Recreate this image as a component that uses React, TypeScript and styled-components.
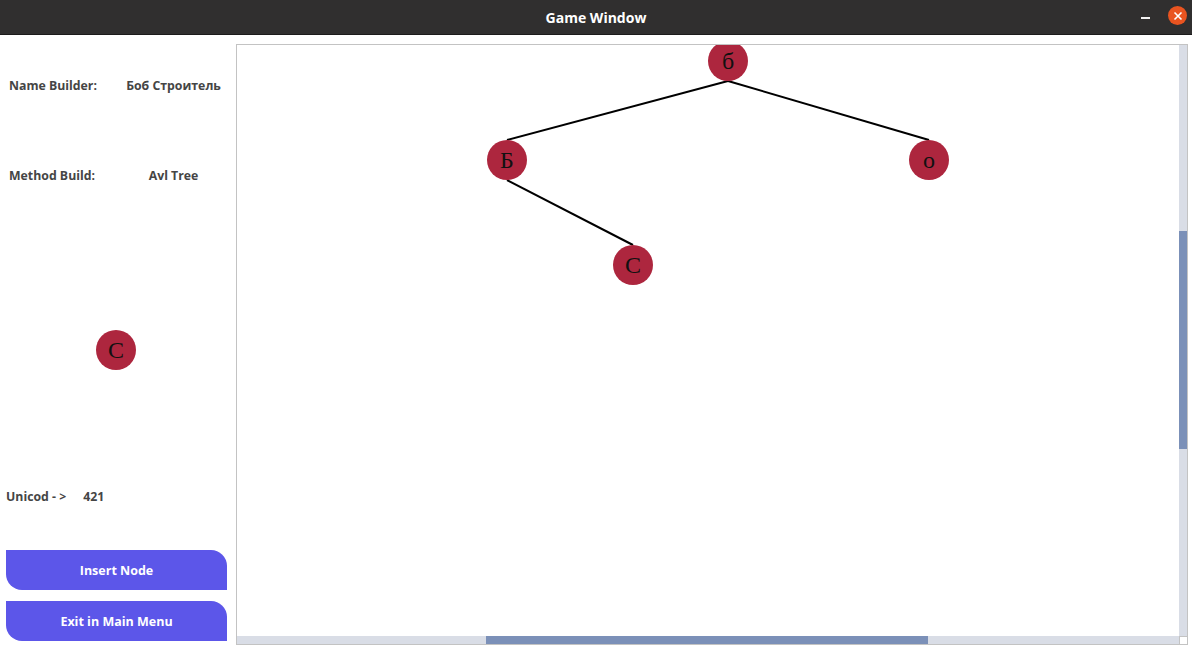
import styled, { createGlobalStyle } from "styled-components";

const GlobalStyle = createGlobalStyle`
  html, body {
    margin: 0;
    padding: 0;
    background: #ffffff;
    overflow: hidden;
  }
  * {
    box-sizing: border-box;
  }
`;

const Window = styled.div`
  width: 1192px;
  height: 658px;
  display: flex;
  flex-direction: column;
  background: #ffffff;
  font-family: "Open Sans", "Noto Sans", sans-serif;
`;

const TitleBar = styled.div`
  height: 35px;
  flex-shrink: 0;
  background: #302f2f;
  border-bottom: 1px solid #1c1b1b;
  display: flex;
  align-items: center;
  justify-content: center;
  position: relative;
  color: #ffffff;
  font-weight: 700;
  font-size: 14px;
`;

const Controls = styled.div`
  position: absolute;
  right: 5px;
  top: 6px;
  display: flex;
  align-items: center;
  gap: 18px;
`;

const MinButton = styled.div`
  width: 9px;
  height: 2px;
  margin-top: 4px;
  background: #f2f2f2;
`;

const CloseButton = styled.div`
  width: 19px;
  height: 19px;
  border-radius: 50%;
  background: #e95420;
  display: flex;
  align-items: center;
  justify-content: center;
`;

const Body = styled.div`
  flex: 1;
  display: flex;
`;

const SidePanel = styled.div`
  width: 236px;
  flex-shrink: 0;
  display: flex;
  flex-direction: column;
  padding-top: 40px;
`;

const InfoRow = styled.div<{ gapTop: number }>`
  display: grid;
  grid-template-columns: 117px 95px;
  align-items: center;
  height: 20px;
  margin-top: ${(p) => p.gapTop}px;
  padding-left: 9px;
  color: #454545;
  font-size: 12.3px;
  font-weight: 700;
  white-space: nowrap;
`;

const Value = styled.span`
  text-align: center;
  display: flex;
  justify-content: center;
`;

const NodeSlot = styled.div`
  margin-top: 145px;
  display: flex;
  justify-content: center;
`;

const Node = styled.div`
  width: 40px;
  height: 40px;
  border-radius: 50%;
  background: #ad263e;
  display: flex;
  align-items: center;
  justify-content: center;
  color: #111111;
  font-family: "Liberation Serif", "Times New Roman", serif;
  font-size: 24px;
  margin-left: -4px;
`;

const UnicodeRow = styled.div`
  margin-top: 116px;
  height: 20px;
  display: flex;
  align-items: center;
  gap: 17px;
  padding-left: 6px;
  color: #454545;
  font-size: 12.3px;
  font-weight: 700;
`;

const Buttons = styled.div`
  margin-top: 44px;
  padding-left: 6px;
  display: flex;
  flex-direction: column;
  gap: 11px;
`;

const ActionButton = styled.button`
  width: 221px;
  height: 40px;
  border: none;
  border-radius: 0 16px 0 16px;
  background: #5c56e9;
  color: #ffffff;
  font-family: "Open Sans", "Noto Sans", sans-serif;
  font-size: 12.5px;
  font-weight: 700;
  cursor: pointer;
`;

const CanvasArea = styled.div`
  flex: 1;
  padding: 9px 4px 13px 0;
  display: flex;
`;

const Canvas = styled.div`
  flex: 1;
  border: 1px solid #c3c3c3;
  display: grid;
  grid-template-columns: 1fr 8px;
  grid-template-rows: 1fr 8px;
  overflow: hidden;
`;

const Drawing = styled.svg`
  display: block;
  width: 100%;
  height: 100%;
  overflow: hidden;
`;

const Track = styled.div`
  background: #d9dde6;
  position: relative;
`;

const Thumb = styled.div`
  position: absolute;
  background: #7b90b8;
`;

const Corner = styled.div`
  background: #ffffff;
  border-left: 1px solid #c3c3c3;
  border-top: 1px solid #c3c3c3;
`;

// tree nodes in canvas coordinates (canvas origin at 237,45)
const nodes = [
  { ch: "б", x: 491, y: 16 },
  { ch: "Б", x: 270, y: 115 },
  { ch: "о", x: 692, y: 115 },
  { ch: "С", x: 396, y: 220 },
];

const edges: [number, number][] = [
  [0, 1],
  [0, 2],
  [1, 3],
];

function App() {
  return (
    <Window>
      <GlobalStyle />
      <TitleBar>
        Game Window
        <Controls>
          <MinButton />
          <CloseButton>
            <svg width="10" height="10" viewBox="0 0 10 10">
              <path d="M1.5 1.5 L8.5 8.5 M8.5 1.5 L1.5 8.5" stroke="#ffffff" strokeWidth="1.6" />
            </svg>
          </CloseButton>
        </Controls>
      </TitleBar>
      <Body>
        <SidePanel>
          <InfoRow gapTop={0}>
            <span>Name Builder:</span>
            <Value>Боб Строитель</Value>
          </InfoRow>
          <InfoRow gapTop={70}>
            <span>Method Build:</span>
            <Value>Avl Tree</Value>
          </InfoRow>
          <NodeSlot>
            <Node>С</Node>
          </NodeSlot>
          <UnicodeRow>
            <span>Unicod - &gt;</span>
            <span>421</span>
          </UnicodeRow>
          <Buttons>
            <ActionButton>Insert Node</ActionButton>
            <ActionButton>Exit in Main Menu</ActionButton>
          </Buttons>
        </SidePanel>
        <CanvasArea>
          <Canvas>
            <Drawing>
              {edges.map(([a, b]) => (
                <line
                  key={`${a}-${b}`}
                  x1={nodes[a].x}
                  y1={nodes[a].y + 20}
                  x2={nodes[b].x}
                  y2={nodes[b].y - 20}
                  stroke="#000000"
                  strokeWidth="2"
                />
              ))}
              {nodes.map((n) => (
                <g key={n.ch}>
                  <circle cx={n.x} cy={n.y} r="20" fill="#ad263e" />
                  <text
                    x={n.x}
                    y={n.y + 8}
                    textAnchor="middle"
                    fontFamily="'Liberation Serif', 'Times New Roman', serif"
                    fontSize="24"
                    fill="#111111"
                  >
                    {n.ch}
                  </text>
                </g>
              ))}
            </Drawing>
            <Track>
              <Thumb style={{ top: 186, height: 218, left: 0, right: 0 }} />
            </Track>
            <Track>
              <Thumb style={{ left: 249, width: 442, top: 0, bottom: 0 }} />
            </Track>
            <Corner />
          </Canvas>
        </CanvasArea>
      </Body>
    </Window>
  );
}

export default App;
